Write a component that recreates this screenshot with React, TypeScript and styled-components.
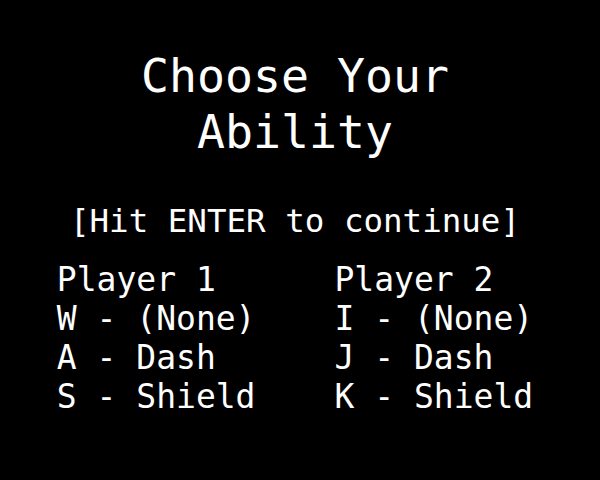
import styled, { createGlobalStyle } from 'styled-components'

const GlobalStyle = createGlobalStyle`
  html, body {
    margin: 0;
    padding: 0;
    background: #000;
  }
`

const Screen = styled.main`
  width: 590px;
  height: 480px;
  padding-top: 48px;
  box-sizing: border-box;
  display: flex;
  flex-direction: column;
  align-items: center;
  color: #fff;
  font-family: 'DejaVu Sans Mono', 'Liberation Mono', monospace;
`

const Title = styled.h1`
  margin: 0;
  font-size: 46.5px;
  font-weight: normal;
  line-height: 56px;
  text-align: center;
`

const Prompt = styled.p`
  margin: 42px 0 0;
  font-size: 32.5px;
`

const Columns = styled.div`
  display: grid;
  grid-template-columns: auto auto;
  column-gap: 79px;
  margin-top: 20px;
  font-size: 33px;
`

const Column = styled.div`
  display: flex;
  flex-direction: column;
  white-space: pre;
`

const players = [
  { name: 'Player 1', keys: ['W', 'A', 'S'] },
  { name: 'Player 2', keys: ['I', 'J', 'K'] },
]

const abilities = ['(None)', 'Dash', 'Shield']

const App = () => (
  <>
    <GlobalStyle />
    <Screen>
      <Title>
        Choose Your
        <br />
        Ability
      </Title>
      <Prompt>[Hit ENTER to continue]</Prompt>
      <Columns>
        {players.map((p) => (
          <Column key={p.name}>
            <span>{p.name}</span>
            {p.keys.map((k, i) => (
              <span key={k}>{`${k} - ${abilities[i]}`}</span>
            ))}
          </Column>
        ))}
      </Columns>
    </Screen>
  </>
)

export default App
